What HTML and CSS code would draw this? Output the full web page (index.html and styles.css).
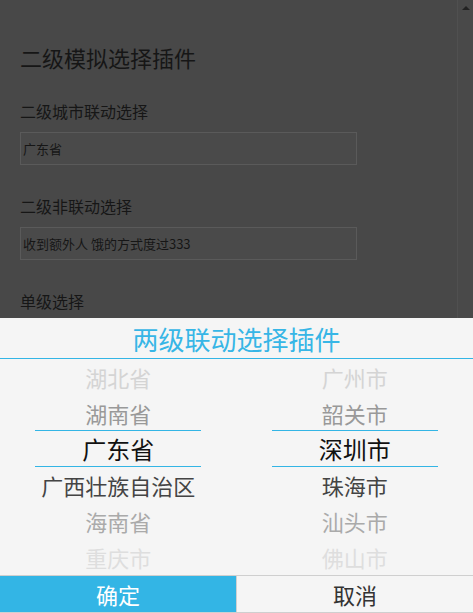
FILE: index.html
```html
<!DOCTYPE html>
<html lang="zh-CN">
<head>
<meta charset="utf-8">
<title>二级模拟选择插件</title>
<link rel="stylesheet" href="styles.css">
</head>
<body>
<div class="page">
  <main class="content">
    <h1 class="page-title">二级模拟选择插件</h1>
    <section class="field">
      <div class="field-label">二级城市联动选择</div>
      <div class="field-input">广东省</div>
    </section>
    <section class="field">
      <div class="field-label">二级非联动选择</div>
      <div class="field-input">收到额外人 饿的方式度过333</div>
    </section>
    <section class="field">
      <div class="field-label">单级选择</div>
    </section>
  </main>
  <div class="scrollbar"><span class="scroll-arrow"></span></div>
</div>

<div class="picker">
  <div class="picker-title">两级联动选择插件</div>
  <div class="picker-wheels">
    <div class="wheel">
      <div class="wheel-band"></div>
      <div class="wheel-item c1">湖北省</div>
      <div class="wheel-item c2">湖南省</div>
      <div class="wheel-item c3 selected">广东省</div>
      <div class="wheel-item c4">广西壮族自治区</div>
      <div class="wheel-item c5">海南省</div>
      <div class="wheel-item c6">重庆市</div>
    </div>
    <div class="wheel">
      <div class="wheel-band"></div>
      <div class="wheel-item c1">广州市</div>
      <div class="wheel-item c2">韶关市</div>
      <div class="wheel-item c3 selected">深圳市</div>
      <div class="wheel-item c4">珠海市</div>
      <div class="wheel-item c5">汕头市</div>
      <div class="wheel-item c6">佛山市</div>
    </div>
  </div>
  <div class="picker-buttons">
    <div class="btn btn-ok">确定</div>
    <div class="btn btn-cancel">取消</div>
  </div>
</div>
</body>
</html>
```

FILE: styles.css
```css
html, body {
  margin: 0;
  padding: 0;
  height: 100%;
}
body {
  background: #484848;
  font-family: "Noto Sans CJK SC", "Microsoft YaHei", "Noto Sans", sans-serif;
  overflow: hidden;
}
.page {
  display: flex;
  height: 613px;
}
.content {
  flex: 1;
  padding: 42px 20px 0 20px;
  color: #161616;
}
.page-title {
  margin: 0 0 27px 0;
  font-size: 22px;
  line-height: 30px;
  font-weight: normal;
}
.field {
  margin-bottom: 29px;
}
.field-label {
  font-size: 16px;
  line-height: 24px;
  margin-bottom: 9px;
}
.field-input {
  width: 333px;
  height: 31px;
  border: 1px solid #5a5a5a;
  background: #4a4a4a;
  font-size: 13px;
  line-height: 31px;
  padding-left: 2px;
  box-sizing: content-box;
}
.scrollbar {
  width: 16px;
  border-left: 1px solid #505050;
  background: #494949;
  display: flex;
  justify-content: center;
  padding-top: 6px;
  box-sizing: border-box;
}
.scroll-arrow {
  width: 0;
  height: 0;
  border-left: 4px solid transparent;
  border-right: 4px solid transparent;
  border-bottom: 4px solid #222;
}

.picker {
  position: fixed;
  left: 0;
  right: 0;
  bottom: 0;
  height: 295px;
  background: #f5f5f5;
  display: flex;
  flex-direction: column;
}
.picker-title {
  height: 40px;
  line-height: 42px;
  text-align: center;
  font-size: 26px;
  color: #37b6e6;
  border-bottom: 1px solid #33b5e5;
}
.picker-wheels {
  display: flex;
  height: 216px;
}
.wheel {
  flex: 1;
  position: relative;
  display: flex;
  flex-direction: column;
  align-items: center;
}
.wheel-band {
  position: absolute;
  left: 15%;
  right: 15%;
  top: 71px;
  height: 35px;
  border-top: 1px solid #33b5e5;
  border-bottom: 1px solid #33b5e5;
}
.wheel-item {
  height: 36px;
  line-height: 36px;
  font-size: 22px;
  text-align: center;
}
.wheel-item.selected {
  font-size: 24px;
}
.c1 { color: #d4d4d4; }
.c2 { color: #999; }
.c3 { color: #111; }
.c4 { color: #444; }
.c5 { color: #aaa; }
.c6 { color: #dedede; }

.picker-buttons {
  display: flex;
  border-top: 1px solid #cfcfcf;
  border-bottom: 1px solid #cfcfcf;
  height: 36px;
}
.btn {
  flex: 1;
  text-align: center;
  font-size: 22px;
  line-height: 36px;
}
.btn-ok {
  background: #33b5e5;
  color: #fff;
  border-right: 1px solid #d0d0d0;
}
.btn-cancel {
  color: #333;
}
```
